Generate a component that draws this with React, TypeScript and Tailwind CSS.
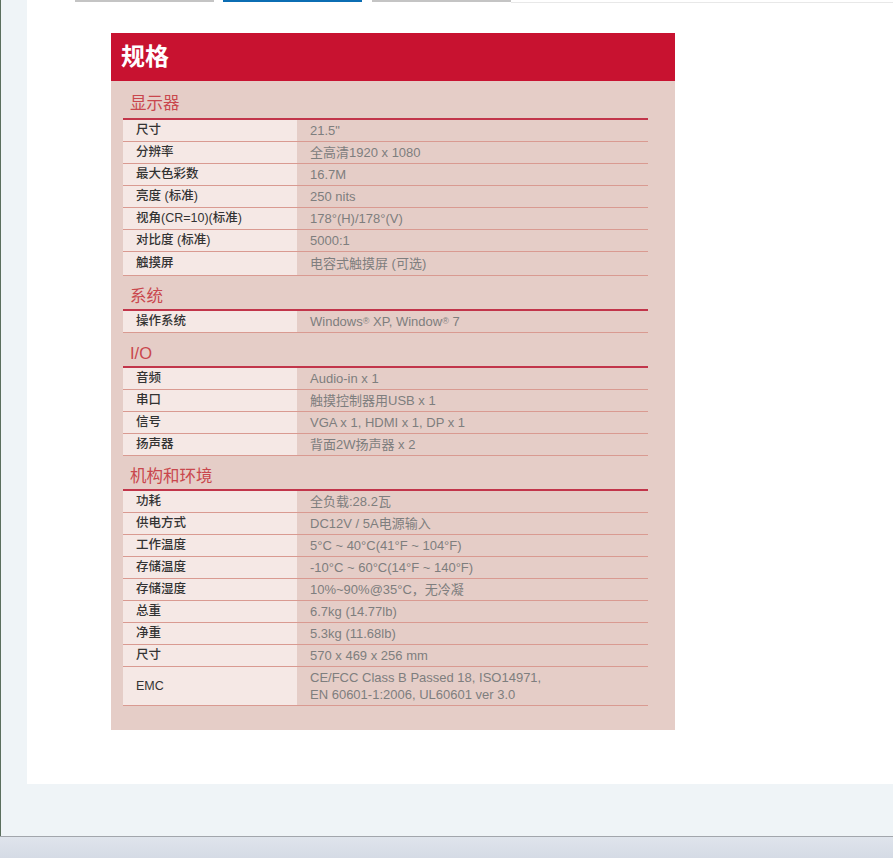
import React from "react";

type Row = { label: string; value: React.ReactNode; h?: string };
type Section = { title: string; rows: Row[] };

const sections: Section[] = [
  {
    title: "显示器",
    rows: [
      { label: "尺寸", value: '21.5"' },
      { label: "分辨率", value: "全高清1920 x 1080" },
      { label: "最大色彩数", value: "16.7M" },
      { label: "亮度 (标准)", value: "250 nits" },
      { label: "视角(CR=10)(标准)", value: "178°(H)/178°(V)" },
      { label: "对比度 (标准)", value: "5000:1" },
      { label: "触摸屏", value: "电容式触摸屏 (可选)", h: "h-[24px]" },
    ],
  },
  {
    title: "系统",
    rows: [
      {
        label: "操作系统",
        value: (
          <>
            Windows<span className="text-[9px] align-[2px]">®</span> XP, Window
            <span className="text-[9px] align-[2px]">®</span> 7
          </>
        ),
      },
    ],
  },
  {
    title: "I/O",
    rows: [
      { label: "音频", value: "Audio-in x 1" },
      { label: "串口", value: "触摸控制器用USB x 1" },
      { label: "信号", value: "VGA x 1, HDMI x 1, DP x 1" },
      { label: "扬声器", value: "背面2W扬声器 x 2" },
    ],
  },
  {
    title: "机构和环境",
    rows: [
      { label: "功耗", value: "全负载:28.2瓦" },
      { label: "供电方式", value: "DC12V / 5A电源输入" },
      { label: "工作温度", value: "5°C ~ 40°C(41°F ~ 104°F)" },
      { label: "存储温度", value: "-10°C ~ 60°C(14°F ~ 140°F)" },
      { label: "存储湿度", value: "10%~90%@35°C，无冷凝" },
      { label: "总重", value: "6.7kg (14.77lb)" },
      { label: "净重", value: "5.3kg (11.68lb)" },
      { label: "尺寸", value: "570 x 469 x 256 mm" },
      {
        label: "EMC",
        value: (
          <>
            CE/FCC Class B Passed 18, ISO14971,
            <br />
            EN 60601-1:2006, UL60601 ver 3.0
          </>
        ),
        h: "h-[39px]",
      },
    ],
  },
];

function SpecTable({ section, first }: { section: Section; first: boolean }) {
  return (
    <div>
      <div
        className={`${first ? "pt-[12px] pb-[5px]" : "pt-[10px] pb-[3px]"} pl-[7px] text-[16.5px] leading-[20px] text-[#c9474d]`}
      >
        {section.title}
      </div>
      <div className="border-t-2 border-[#c2354a]">
        {section.rows.map((r, i) => (
          <div key={i} className={`flex ${r.h ?? "h-[22px]"} border-b border-[#d99a91]`}>
            <div className="w-[174px] shrink-0 bg-[#f5e8e5] pl-[13px] flex items-center text-[12.5px] font-medium text-[#333333]">
              {r.label}
            </div>
            <div className="pl-[13px] flex items-center text-[13px] leading-[17px] text-[#7e7e7e]">
              <div>{r.value}</div>
            </div>
          </div>
        ))}
      </div>
    </div>
  );
}

export default function App() {
  return (
    <div
      className="w-[893px] h-[858px] overflow-hidden bg-[#eff4f7] flex flex-col"
      style={{ fontFamily: '"Liberation Sans", "Noto Sans CJK SC", sans-serif' }}
    >
      <div className="h-[836px] flex border-l border-[#5b6f5e]">
        <div className="w-[26px] shrink-0" />
        <div className="flex-1 h-[784px] bg-white flex flex-col">
          {/* tabs */}
          <div className="flex pl-[48px] h-[3px] items-start">
            <div className="w-[139px] h-[2px] bg-[#c4c4c4]" />
            <div className="w-[139px] h-[2px] bg-[#0b6db3] ml-[9px]" />
            <div className="w-[139px] h-[2px] bg-[#c4c4c4] ml-[10px]" />
            <div className="flex-1 h-[1px] mt-[2px] bg-[#e8e8e8]" />
          </div>
          <div className="pl-[84px] pt-[30px]">
            <div className="w-[564px]">
              <div className="h-[48px] bg-[#c81230] pl-[10px] flex items-center text-[24px] font-bold text-white">
                规格
              </div>
              <div className="bg-[#e5cdc7] pl-[12px] pr-[27px] pb-[24px]">
                {sections.map((s, i) => (
                  <SpecTable key={s.title} section={s} first={i === 0} />
                ))}
              </div>
            </div>
          </div>
        </div>
      </div>
      <div className="h-[22px] border-t border-[#a2a6ac] bg-gradient-to-b from-[#dfe4ec] to-[#d5dbe5]" />
    </div>
  );
}
